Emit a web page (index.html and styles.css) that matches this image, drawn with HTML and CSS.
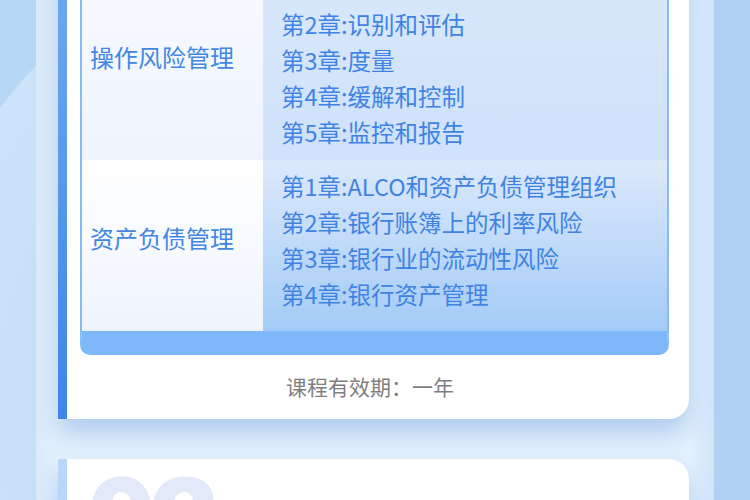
FILE: index.html
```html
<!DOCTYPE html>
<html lang="zh-CN">
<head>
  <meta charset="utf-8"/>
  <meta name="viewport" content="width=device-width,initial-scale=1"/>
  <title>课程大纲</title>
  <link rel="stylesheet" href="styles.css">
</head>
<body>
  <div class="page">
    <div class="column">
      <section class="card card-plan">
        <div class="syllabus">
          <div class="row row-ops">
            <div class="module">操作风险管理</div>
            <ul class="chapters">
              <li>第2章:识别和评估</li>
              <li>第3章:度量</li>
              <li>第4章:缓解和控制</li>
              <li>第5章:监控和报告</li>
            </ul>
          </div>
          <div class="row row-alm">
            <div class="module">资产负债管理</div>
            <ul class="chapters">
              <li>第1章:ALCO和资产负债管理组织</li>
              <li>第2章:银行账簿上的利率风险</li>
              <li>第3章:银行业的流动性风险</li>
              <li>第4章:银行资产管理</li>
            </ul>
          </div>
        </div>
        <p class="validity">课程有效期：一年</p>
      </section>

      <section class="card card-next">
        <div class="card-index">02</div>
      </section>
    </div>
  </div>
</body>
</html>
```

FILE: styles.css
```css
body {
  margin: 0;
  font-family: "Noto Sans CJK SC", "Noto Sans", sans-serif;
  background: linear-gradient(to right, #b6d7f6 50%, #afd1f3 50%);
}
.page {
  padding: 0 36px;
  background:
    radial-gradient(circle 500px at 398px 449px, rgba(255,255,255,0) 0, rgba(255,255,255,.3) 498px, rgba(255,255,255,0) 500px) 0 0 / 36px 100% no-repeat;
}
.column {
  padding: 0 25px 40px 22px;
  background: linear-gradient(to right, #dbebfb, #e5f1fd 22px, #e5f1fd calc(100% - 25px), #d1e5f9);
}
.card {
  background: #fff;
  border-radius: 0 20px 20px 0;
  box-shadow: 0 14px 24px rgba(110, 160, 222, .45);
}
.card-plan {
  margin-top: -40px;
  padding: 0 20px 0 13px;
  background:
    linear-gradient(to bottom, #6eaaf1, #3f85e8) left / 9px 100% no-repeat,
    #fff;
}
.card-next {
  margin-top: 40px;
  height: 120px;
  padding: 4px 20px 0 28px;
  background:
    linear-gradient(#b8d7fb, #b8d7fb) left / 9px 100% no-repeat,
    #fff;
}
.card-index {
  font-family: Roboto, "Noto Sans", sans-serif;
  font-size: 122px;
  font-weight: 900;
  line-height: 1;
  letter-spacing: -7px;
  color: #e2eaf9;
}

/* syllabus table */
.syllabus {
  margin-left: 9px;
  border: 2px solid #88baf7;
  border-top: 0;
  border-bottom: 24px solid #7eb8fa;
  border-radius: 0 0 10px 10px;
}
.row {
  display: grid;
  grid-template-columns: 181px 1fr;
}
.module {
  display: flex;
  align-items: center;
  padding-left: 8px;
  font-size: 24px;
  color: #4386e4;
}
.chapters {
  list-style: none;
  margin: 0;
  padding: 0 0 0 18px;
  font-size: 23.5px;
  line-height: 36px;
  color: #3f83e4;
}
.row-ops .module {
  padding-bottom: 8px;
  background: linear-gradient(to bottom, #f8fbff, #eef4fd);
}
.row-ops .chapters {
  padding-top: 46px;
  padding-bottom: 10px;
  background: linear-gradient(to bottom, #d9e8fb, #cfe2fa);
}
.row-alm .module {
  padding-bottom: 16px;
  background: linear-gradient(to bottom, #ffffff, #eef4fd);
}
.row-alm .chapters {
  padding-top: 8px;
  padding-bottom: 19px;
  background: linear-gradient(to bottom, #dce9fc, #a3cbf6);
}
.validity {
  margin: 0;
  padding-bottom: 2px;
  line-height: 62px;
  text-align: center;
  font-size: 21px;
  color: #7f7f7f;
}
```
